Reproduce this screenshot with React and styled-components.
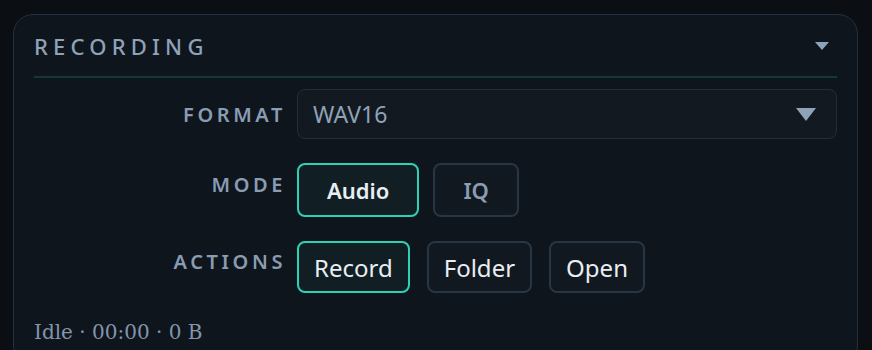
import React, { useState } from "react";
import styled, { createGlobalStyle } from "styled-components";

const GlobalStyle = createGlobalStyle`
  body {
    margin: 0;
    background: #0b0f14;
    font-family: "Noto Sans", "Open Sans", sans-serif;
  }
`;

const Page = styled.div`
  padding: 14px 14px 0 13px;
`;

const Panel = styled.section`
  background: #0f151d;
  border: 1px solid #223040;
  border-radius: 20px;
  padding: 0 20px 20px;
`;

const Header = styled.div`
  height: 61px;
  display: flex;
  align-items: center;
  justify-content: space-between;
  border-bottom: 2px solid #16373a;
`;

const Title = styled.h2`
  margin: 0;
  font-size: 22px;
  font-weight: 500;
  letter-spacing: 5.2px;
  color: #8ea2b8;
`;

const Caret = styled.span`
  width: 0;
  height: 0;
  border-left: ${(p) => p.$w / 2}px solid transparent;
  border-right: ${(p) => p.$w / 2}px solid transparent;
  border-top: ${(p) => p.$h}px solid #8ea2b8;
  margin-right: ${(p) => p.$inset}px;
`;

const Form = styled.div`
  display: grid;
  grid-template-columns: 252px 1fr;
  column-gap: 11px;
  row-gap: 12px;
  align-items: center;
  margin-top: 11px;
`;

const Label = styled.div`
  text-align: right;
  font-size: 20px;
  font-weight: 600;
  letter-spacing: 3.6px;
  color: #8a9cb1;
`;

const Select = styled.div`
  height: 50px;
  box-sizing: border-box;
  border: 1.5px solid #222e3b;
  border-radius: 8px;
  background: #121920;
  padding: 0 20px 0 15px;
  display: flex;
  align-items: center;
  justify-content: space-between;
  font-size: 23px;
  color: #8ea2b8;
  cursor: pointer;
`;

const ButtonRow = styled.div`
  display: flex;
  gap: ${(p) => p.$gap}px;
  padding-top: 12px;
`;

const Button = styled.button`
  box-sizing: border-box;
  height: ${(p) => (p.$mode ? 54 : 52)}px;
  padding: 0 ${(p) => (p.$mode ? 28 : 15)}px;
  border-radius: 8px;
  border: 2px solid ${(p) => (p.$active ? "#2fd0b5" : "#283543")};
  background: ${(p) => (p.$active ? "#111f25" : "#111820")};
  color: ${(p) => (p.$mode && !p.$active ? "#8c9db1" : "#e9eef3")};
  font-family: "Noto Sans", "Open Sans", sans-serif;
  font-size: ${(p) => (p.$mode ? 22 : 24)}px;
  font-weight: ${(p) => (p.$mode ? 600 : 400)};
  cursor: pointer;
`;

const Status = styled.div`
  margin-top: 27px;
  font-family: "DejaVu Serif", serif;
  font-size: 20px;
  line-height: 24px;
  color: #8396ab;
`;

export default function App() {
  const [mode, setMode] = useState("Audio");

  return (
    <Page>
      <GlobalStyle />
      <Panel>
        <Header>
          <Title>RECORDING</Title>
          <Caret $w={15} $h={8} $inset={8} />
        </Header>

        <Form>
          <Label>FORMAT</Label>
          <Select>
            <span>WAV16</span>
            <Caret $w={20} $h={13} $inset={0} />
          </Select>

          <Label>MODE</Label>
          <ButtonRow $gap={14}>
            {["Audio", "IQ"].map((m) => (
              <Button
                key={m}
                $mode
                $active={mode === m}
                onClick={() => setMode(m)}
              >
                {m}
              </Button>
            ))}
          </ButtonRow>

          <Label>ACTIONS</Label>
          <ButtonRow $gap={17}>
            <Button $active>Record</Button>
            <Button>Folder</Button>
            <Button>Open</Button>
          </ButtonRow>
        </Form>

        <Status>Idle · 00:00 · 0 B</Status>
      </Panel>
    </Page>
  );
}
